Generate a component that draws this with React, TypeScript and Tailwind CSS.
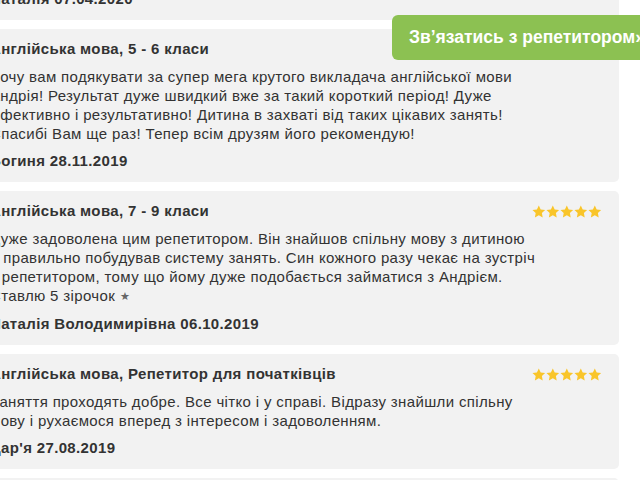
import { ReactNode } from 'react';

interface Review {
  subject: string;
  lines: ReactNode[];
  author: string;
}

// lines are kept as in the original layout so the wrap matches
const REVIEWS: Review[] = [
  {
    subject: 'Англійська мова, 5 - 6 класи',
    lines: [
      'Дуже задоволені заняттями, дитина із задоволенням займається.',
      'Рекомендую всім!',
    ],
    author: 'Наталія 07.04.2020',
  },
  {
    subject: 'Англійська мова, 5 - 6 класи',
    lines: [
      'Хочу вам подякувати за супер мега крутого викладача англійської мови',
      'Андрія! Результат дуже швидкий вже за такий короткий період! Дуже',
      'Ефективно і результативно! Дитина в захваті від таких цікавих занять!',
      'Спасибі Вам ще раз! Тепер всім друзям його рекомендую!',
    ],
    author: 'Богиня 28.11.2019',
  },
  {
    subject: 'Англійська мова, 7 - 9 класи',
    lines: [
      'Дуже задоволена цим репетитором. Він знайшов спільну мову з дитиною',
      'й правильно побудував систему занять. Син кожного разу чекає на зустріч',
      'з репетитором, тому що йому дуже подобається займатися з Андрієм.',
      <>
        Ставлю 5 зірочок{' '}
        <span className="text-[11px] text-[#666] align-[1px]">★</span>
      </>,
    ],
    author: 'Наталія Володимирівна 06.10.2019',
  },
  {
    subject: 'Англійська мова, Репетитор для початківців',
    lines: [
      'Заняття проходять добре. Все чітко і у справі. Відразу знайшли спільну',
      'мову і рухаємося вперед з інтересом і задоволенням.',
    ],
    author: "Дар'я 27.08.2019",
  },
  {
    subject: 'Англійська мова, 5 - 6 класи',
    lines: ['Чудовий викладач, заняття цікаві та корисні.'],
    author: 'Олена 12.08.2019',
  },
];

function Stars() {
  return (
    <div className="flex items-center gap-[0.5px] pt-[4px]">
      {[0, 1, 2, 3, 4].map((i) => (
        <svg key={i} width="13.6" height="13" viewBox="0 0 24 23">
          <path
            d="M12 0.8l3.4 7.1 7.8 1-5.7 5.4 1.4 7.7L12 18.3l-6.9 3.7 1.4-7.7L0.8 8.9l7.8-1z"
            fill="#f9c52a"
          />
        </svg>
      ))}
    </div>
  );
}

function ReviewCard({ review }: { review: Review }) {
  return (
    <div className="flex rounded-[5px] bg-[#f2f2f2] pl-5 pr-5 pt-[10px] pb-[11px] tracking-[0.35px] text-[#333]">
      <div className="w-[539px] shrink-0">
        <div className="text-[15px] leading-[20px] font-bold">{review.subject}</div>
        <div className="mt-2 text-[15px] leading-[19px]">
          {review.lines.map((line, i) => (
            <div key={i} className="whitespace-nowrap">
              {line}
            </div>
          ))}
        </div>
        <div className="mt-2 text-[15px] leading-[20px] font-bold">{review.author}</div>
      </div>
      <div className="ml-[3px]">
        <Stars />
      </div>
    </div>
  );
}

export default function App() {
  return (
    <div
      className="relative h-[480px] w-[640px] overflow-hidden bg-white"
      style={{ fontFamily: '"Liberation Sans", Arial, sans-serif' }}
    >
      <div className="ml-[-30px] mt-[-95px] flex w-[649px] flex-col gap-[9px]">
        {REVIEWS.map((r, i) => (
          <ReviewCard key={i} review={r} />
        ))}
      </div>

      {/* Floating contact button */}
      <button className="absolute left-[392px] top-[15px] h-[45px] whitespace-nowrap rounded-[6px] bg-[#8cc152] pl-[17px] pr-6 text-[17.5px] font-bold text-white">
        Зв’язатись з репетитором»
      </button>
    </div>
  );
}
